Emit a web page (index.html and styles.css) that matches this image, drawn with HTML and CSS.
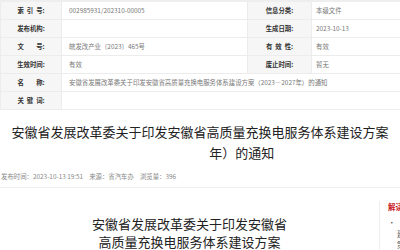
FILE: index.html
```html
<!DOCTYPE html>
<html lang="zh-CN">
<head>
    <meta charset="UTF-8">
    <meta name="viewport" content="width=device-width, initial-scale=1.0">
    <title>安徽省发展改革委关于印发安徽省高质量充换电服务体系建设方案（2023—2027年）的通知</title>
    <link rel="stylesheet" href="styles.css">
</head>
<body>
    <table class="info">
        <colgroup>
            <col class="c-label">
            <col class="c-value">
            <col class="c-label2">
            <col class="c-value2">
        </colgroup>
        <tr>
            <th><span class="ls">索引</span>号:</th>
            <td>002985931/202310-00005</td>
            <th>信息分类:</th>
            <td class="v2">本级文件</td>
        </tr>
        <tr>
            <th>发布机构:</th>
            <td></td>
            <th>生成日期:</th>
            <td class="v2">2023-10-13</td>
        </tr>
        <tr>
            <th><span class="ls">文　</span>号:</th>
            <td>皖发改产业〔2023〕465号</td>
            <th><span class="ls">有效</span>性:</th>
            <td class="v2">有效</td>
        </tr>
        <tr>
            <th>生效时间:</th>
            <td>有效</td>
            <th>废止时间:</th>
            <td class="v2">暂无</td>
        </tr>
        <tr>
            <th><span class="ls">名　</span>称:</th>
            <td colspan="3">安徽省发展改革委关于印发安徽省高质量充换电服务体系建设方案（2023—2027年）的通知</td>
        </tr>
        <tr>
            <th><span class="ls">关键</span>词:</th>
            <td colspan="3"></td>
        </tr>
    </table>

    <div class="article-head">
        <h1 class="title">安徽省发展改革委关于印发安徽省高质量充换电服务体系建设方案<span class="blank">（2023—2027</span>年）的通知</h1>
        <div class="meta">
            <span>发布时间：2023-10-13 19:51</span>
            <span>来源：省汽车办</span>
            <span>浏览量：396</span>
        </div>
    </div>

    <div class="content">
        <div class="main">
            <h2 class="doc-title">安徽省发展改革委关于印发安徽省高质量充换电服务体系建设方案（2023—2027年）的通知</h2>
        </div>
        <div class="side">
            <div class="side-title">解读</div>
            <ul class="side-list">
                <li>《安徽省高质量充换电服务体系建设方案（2023—2027年）》政策解读</li>
            </ul>
        </div>
    </div>
</body>
</html>
```

FILE: styles.css
```css
body {
    margin: 0;
    font-family: "Noto Sans CJK SC", "Liberation Sans", sans-serif;
    color: #333;
    background-color: #fff;
    overflow: hidden;
}
.info {
    width: 400px;
    border-collapse: collapse;
    table-layout: fixed;
    border-top: 2px solid #eee;
    font-size: 6.4px;
}
.c-label { width: 61px; }
.c-value { width: 186px; }
.c-label2 { width: 64px; }
.c-value2 { width: 89px; }
.info th,
.info td {
    height: 17px;
    padding: 0 0 0 7px;
    border: 1px solid #ececec;
    white-space: nowrap;
    overflow: hidden;
}
.info th {
    padding: 0;
    background-color: #f6f6f6;
    color: #333;
    font-weight: bold;
    text-align: center;
}
.info td {
    color: #777;
    font-weight: normal;
    text-align: left;
}
.info td.v2 {
    padding-left: 4px;
}
.ls {
    letter-spacing: 3px;
}
.article-head {
    padding: 11px 10px 5px;
    border-bottom: 1px solid #eee;
}
.title {
    margin: 0;
    font-size: 13px;
    line-height: 21px;
    font-weight: normal;
    color: #222;
    text-align: center;
}
.blank {
    color: #fff;
}
.meta {
    margin-top: 9px;
    margin-left: -9px;
    font-size: 6.4px;
    line-height: 10px;
    color: #888;
    display: flex;
    gap: 6px;
}
.content {
    display: flex;
}
.main {
    flex: 0 0 379px;
}
.doc-title {
    width: 200px;
    margin: 27px auto 0;
    font-size: 13px;
    line-height: 18px;
    font-weight: normal;
    color: #222;
    text-align: center;
}
.side {
    flex: 0 0 130px;
    margin-top: 13px;
    padding-left: 8px;
    border-left: 1px solid #eee;
    min-height: 80px;
}
.side-title {
    font-size: 7.5px;
    line-height: 12px;
    font-weight: bold;
    color: #c8161d;
}
.side-list {
    margin: 4px 0 0;
    padding: 0 0 0 9px;
    list-style: none;
    width: 112px;
    font-size: 7.5px;
    line-height: 11px;
    color: #555;
}
.side-list li {
    position: relative;
}
.side-list li::before {
    content: "·";
    position: absolute;
    left: -9px;
}
```
